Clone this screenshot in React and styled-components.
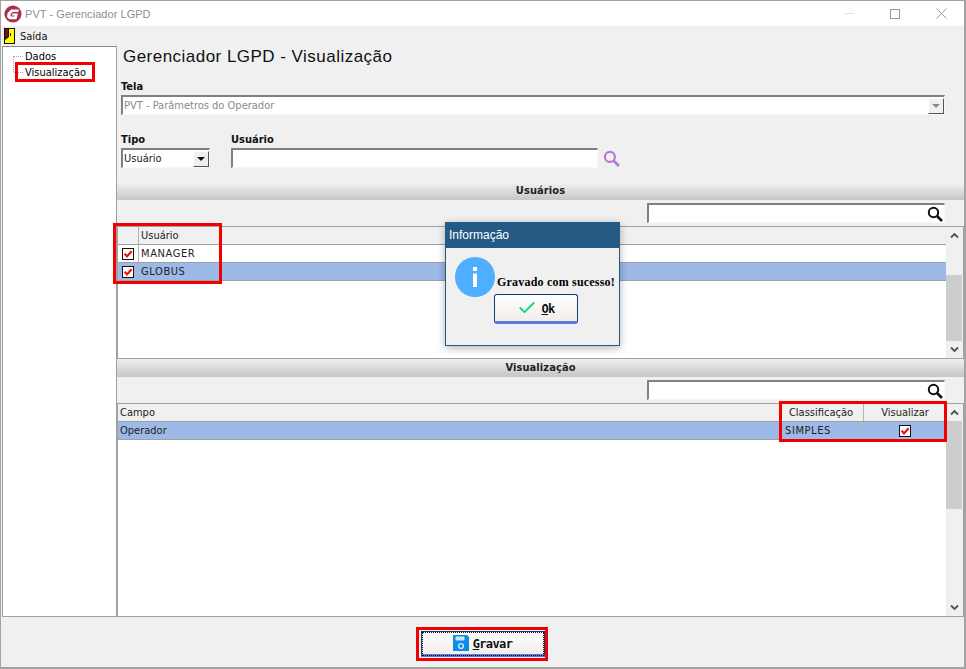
import React from 'react'
import styled, { createGlobalStyle } from 'styled-components'
import { Check } from 'lucide-react'

const Global = createGlobalStyle`
  html, body { margin: 0; padding: 0; overflow: hidden; background: #f0f0f0; }
  * { box-sizing: border-box; }
`

const uiFont = '"DejaVu Sans Condensed", "DejaVu Sans", sans-serif'

const Win = styled.div`
  position: relative;
  width: 966px;
  height: 669px;
  border: 1px solid #a3a3a3;
  border-bottom-width: 2px;
  border-right-width: 2px;
  background: #f0f0f0;
  font-family: ${uiFont};
  font-size: 11px;
  color: #111;
  display: flex;
  flex-direction: column;
  overflow: hidden;
`

const TitleBar = styled.div`
  height: 25px;
  background: #fff;
  display: flex;
  align-items: center;
  padding-left: 3px;
  flex: none;
`

const TitleText = styled.span`
  margin-left: 3px;
  color: #8f8f8f;
  font-family: "Liberation Sans", Arial, sans-serif;
  font-size: 11px;
  letter-spacing: 0.05px;
`

const WinButtons = styled.div`
  margin-left: auto;
  display: flex;
  align-items: center;
  color: #9a9a9a;
`

const WinButton = styled.div`
  width: 46px;
  height: 25px;
  display: flex;
  align-items: center;
  justify-content: center;
`

const MenuBar = styled.div`
  height: 20px;
  display: flex;
  align-items: center;
  gap: 5px;
  padding-left: 3px;
  flex: none;
`

const Body = styled.div`
  flex: 1;
  display: flex;
  min-height: 0;
  padding-left: 1px;
`

const Side = styled.div`
  width: 115px;
  background: #fff;
  border: 1px solid #a0a0a0;
  border-top-color: #8a8a8a;
  padding: 3px 0 0 10px;
  flex: none;
`

const TreeList = styled.div`
  position: relative;
  border-left: 1px dotted #aaa;
  height: 16px;
  margin-top: 6px;
`

const TreeRow = styled.div`
  position: absolute;
  left: 0;
  top: ${p => p.$top}px;
  height: 16px;
  line-height: 17px;
  padding-left: 11px;
  white-space: nowrap;
  color: #000;
  &::before {
    content: '';
    position: absolute;
    left: 0;
    top: 8px;
    width: 9px;
    border-top: 1px dotted #aaa;
  }
`

const Main = styled.div`
  flex: 1;
  min-width: 0;
  display: flex;
  flex-direction: column;
`

const Form = styled.div`
  padding: 0 19px 0 4px;
  height: 137px;
  flex: none;
`

const Heading = styled.h1`
  margin: 0;
  padding: 1px 0 0 2px;
  height: 33px;
  font-family: "Liberation Sans", Arial, sans-serif;
  font-size: 17px;
  line-height: 20px;
  font-weight: 400;
  letter-spacing: 0.47px;
  color: #111;
`

const Label = styled.div`
  font-weight: 700;
  font-size: 11px;
  height: 16px;
  line-height: 16px;
`

const Sunken = styled.div`
  height: 20px;
  background: #fff;
  border: 1px solid #f8f8f8;
  border-top: 2px solid #808080;
  border-left: 2px solid #808080;
  display: flex;
  align-items: center;
  font-size: 11px;
  color: ${p => (p.$muted ? '#8a8a8a' : '#222')};
  padding-left: 1px;
  width: ${p => p.$w || 'auto'};
`

const DropBtn = styled.div`
  margin-left: auto;
  width: 16px;
  height: 16px;
  background: #f0f0f0;
  border: 1px solid #fff;
  border-right-color: #555;
  border-bottom-color: #555;
  display: flex;
  align-items: center;
  justify-content: center;
  &::after {
    content: '';
    border-left: 4px solid transparent;
    border-right: 4px solid transparent;
    border-top: 4px solid ${p => (p.$muted ? '#8a8a8a' : '#111')};
  }
`

const FieldRow = styled.div`
  display: flex;
  gap: 21px;
  margin-top: 17px;
`

const FieldPair = styled.div`
  display: flex;
  align-items: center;
  gap: 5px;
`

const SectionBar = styled.div`
  height: ${p => p.$h || 17}px;
  flex: none;
  background: linear-gradient(#f0f0f0, #c6c6c6);
  text-align: center;
  font-weight: 700;
  font-size: 11px;
  line-height: ${p => p.$h || 16}px;
  letter-spacing: 0.1px;
  color: #222;
`

const SearchRow = styled.div`
  height: ${p => p.$h}px;
  flex: none;
  display: flex;
  justify-content: flex-end;
  padding: ${p => p.$top}px 19px 0 0;
`

const SearchBox = styled(Sunken)`
  width: 298px;
  justify-content: flex-end;
  padding-right: 1px;
`

const GridFrame = styled.div`
  height: ${p => p.$h}px;
  flex: none;
  border: 1px solid #a0a0a0;
  background: #fff;
  display: flex;
`

const GridBody = styled.div`
  flex: 1;
  min-width: 0;
`

const Row = styled.div`
  height: 18px;
  display: grid;
  grid-template-columns: ${p => p.$cols};
  background: ${p => (p.$head ? '#f0f0f0' : p.$sel ? '#9db9e8' : '#fff')};
  border-bottom: 1px solid #a0a0a0;
`

const Cell = styled.div`
  display: flex;
  align-items: center;
  justify-content: ${p => (p.$center ? 'center' : 'flex-start')};
  padding-left: ${p => (p.$center ? 0 : p.$pad || 2)}px;
  font-size: 11px;
  letter-spacing: ${p => (p.$upper ? '0.6px' : 0)};
  color: #222;
  border-right: ${p => (p.$line ? '1px solid #b4b4b4' : 'none')};
  overflow: hidden;
  white-space: nowrap;
`

const Scroll = styled.div`
  width: 17px;
  flex: none;
  background: #f0f0f0;
  display: flex;
  flex-direction: column;
  padding-right: 1px;
`

const ScrollBtn = styled.div`
  height: 17px;
  flex: none;
  display: flex;
  align-items: center;
  justify-content: center;
`

const ScrollTrack = styled.div`
  flex: 1;
  display: flex;
  flex-direction: column;
  justify-content: ${p => (p.$end ? 'flex-end' : 'flex-start')};
`

const Thumb = styled.div`
  height: ${p => p.$h}px;
  background: #cdcdcd;
`

const Footer = styled.div`
  height: 50px;
  flex: none;
  display: flex;
  justify-content: center;
  align-items: flex-start;
  padding-top: 14px;
`

const ActionBtn = styled.div`
  width: ${p => p.$w}px;
  height: ${p => p.$h}px;
  background: linear-gradient(#ffffff, #f3f0ee 85%, #f0eeee);
  border: 1px solid #123a70;
  border-bottom: 3px solid #5f78dc;
  border-radius: ${p => (p.$round ? 3 : 0)}px;
  display: flex;
  align-items: center;
  justify-content: center;
  gap: 4px;
  font-family: "DejaVu Sans Mono", monospace;
  font-weight: 700;
  font-size: 12px;
  letter-spacing: -0.6px;
  color: #111;
  outline: ${p => (p.$focus ? '1px dotted #111' : 'none')};
  outline-offset: -2px;
  span { padding-top: 1px; }
  u { text-underline-offset: 1px; }
`

const Highlight = styled.div`
  position: absolute;
  left: ${p => p.$x}px;
  top: ${p => p.$y}px;
  width: ${p => p.$w}px;
  height: ${p => p.$h}px;
  border: 3px solid #f00000;
  pointer-events: none;
`

const Dialog = styled.div`
  position: absolute;
  left: 444px;
  top: 221px;
  width: 175px;
  height: 124px;
  background: #f0f0f0;
  border: 1px solid #245a84;
  box-shadow: 0 2px 8px rgba(0, 0, 0, 0.3);
  display: flex;
  flex-direction: column;
`

const DialogTitle = styled.div`
  height: 25px;
  background: #245a84;
  color: #fff;
  font-family: "Liberation Sans", Arial, sans-serif;
  font-size: 12px;
  line-height: 25px;
  padding-left: 3px;
  flex: none;
`

const DialogBody = styled.div`
  display: flex;
  align-items: center;
  padding: 9px 0 0 9px;
  gap: 2px;
`

const DialogText = styled.span`
  font-family: "Liberation Serif", "Times New Roman", serif;
  font-weight: 700;
  font-size: 12px;
  letter-spacing: 0.2px;
  color: #000;
  white-space: nowrap;
  padding-top: 10px;
`

const DialogAction = styled.div`
  display: flex;
  justify-content: center;
  margin-top: -3px;
  padding-left: 7px;
`

const Box = () => (
  <svg width="12" height="12" viewBox="0 0 12 12">
    <rect x="0.5" y="0.5" width="11" height="11" fill="#fff" stroke="#111" />
    <path d="M2.6 5.6 L5 8.4 L9.6 3.2" fill="none" stroke="#ee1111" strokeWidth="2.2" />
  </svg>
)

const Logo = () => (
  <svg width="18" height="18" viewBox="0 0 18 18">
    <circle cx="9" cy="9" r="8.6" fill="#a9324a" />
    <path d="M15 4.4 H7.2 L3.6 8 L3 12 L5.4 14.2 H12.4 L14 8.6 H8.4 L7.8 10.6 H10.8 L10.4 11.6 H7 L6.4 10.6 L7.2 8.2 L8.8 7 H14 Z" fill="#fff" />
  </svg>
)

const ExitIcon = () => (
  <svg width="11" height="16" viewBox="0 0 11 16">
    <rect width="11" height="16" fill="#111" />
    <path d="M5 1 H10 V15 H1 V12 L5 9 Z" fill="#ffff00" />
    <rect x="6" y="5" width="1" height="3" fill="#1a1a90" />
    <path d="M1 1 H4 V8 L1 10 Z" fill="#7a1010" />
  </svg>
)

const Lens = ({ color = '#111', size = 16, width = 2 }) => (
  <svg width={size} height={size} viewBox="0 0 16 16">
    <circle cx="6.5" cy="6.5" r="4.7" fill="none" stroke={color} strokeWidth={width} />
    <path d="M10 10 L15 15" stroke={color} strokeWidth={width + 0.6} />
  </svg>
)

const Chevron = ({ down }) => (
  <svg width="9" height="7" viewBox="0 0 9 7">
    <path d={down ? 'M1 1.5 L4.5 5 L8 1.5' : 'M1 5.5 L4.5 2 L8 5.5'} fill="none" stroke="#505050" strokeWidth="1.8" />
  </svg>
)

const Floppy = () => (
  <svg width="16" height="16" viewBox="0 0 16 16">
    <path d="M0 0 H14 L16 2 V16 H0 Z" fill="#0a8de8" />
    <rect x="2.5" y="1.5" width="9" height="4" rx="0.5" fill="#cfe6fa" />
    <circle cx="8" cy="11" r="2.4" fill="none" stroke="#cfe6fa" strokeWidth="1.4" />
  </svg>
)

const InfoIcon = () => (
  <svg width="40" height="40" viewBox="0 0 40 40">
    <circle cx="20" cy="20" r="20" fill="#4eaeff" />
    <rect x="18" y="10" width="4" height="4" fill="#fff" />
    <rect x="18" y="16.5" width="4" height="13.5" fill="#fff" />
  </svg>
)

const ScrollBar = ({ thumb, end }) => (
  <Scroll>
    <ScrollBtn><Chevron /></ScrollBtn>
    <ScrollTrack $end={end}><Thumb $h={thumb} /></ScrollTrack>
    <ScrollBtn><Chevron down /></ScrollBtn>
  </Scroll>
)

const userCols = '21px 80px 1fr'
const viewCols = '1fr 85px 82px'

export default function App() {
  return (
    <Win>
      <Global />
      <TitleBar>
        <Logo />
        <TitleText>PVT - Gerenciador LGPD</TitleText>
        <WinButtons>
          <WinButton>
            <svg width="11" height="11" viewBox="0 0 11 11"><path d="M0.5 5.5 H10.5" stroke="#e2e2e2" /></svg>
          </WinButton>
          <WinButton>
            <svg width="10" height="10" viewBox="0 0 10 10"><rect x="0.5" y="0.5" width="9" height="9" fill="none" stroke="#9a9a9a" /></svg>
          </WinButton>
          <WinButton>
            <svg width="11" height="11" viewBox="0 0 11 11"><path d="M0.5 0.5 L10.5 10.5 M10.5 0.5 L0.5 10.5" stroke="#9a9a9a" /></svg>
          </WinButton>
        </WinButtons>
      </TitleBar>
      <MenuBar>
        <ExitIcon />
        <span>Saída</span>
      </MenuBar>
      <Body>
        <Side>
          <TreeList>
            <TreeRow $top={-8}>Dados</TreeRow>
            <TreeRow $top={8}>Visualização</TreeRow>
          </TreeList>
        </Side>
        <Main>
          <Form>
            <Heading>Gerenciador LGPD - Visualização</Heading>
            <Label>Tela</Label>
            <Sunken $muted>
              PVT - Parâmetros do Operador
              <DropBtn $muted />
            </Sunken>
            <FieldRow>
              <div>
                <Label>Tipo</Label>
                <Sunken $w="89px">
                  Usuário
                  <DropBtn />
                </Sunken>
              </div>
              <div>
                <Label>Usuário</Label>
                <FieldPair>
                  <Sunken $w="367px" />
                  <Lens color="#b877d8" size={17} />
                </FieldPair>
              </div>
            </FieldRow>
          </Form>
          <SectionBar>Usuários</SectionBar>
          <SearchRow $h={26} $top={3}>
            <SearchBox><Lens /></SearchBox>
          </SearchRow>
          <GridFrame $h={133}>
            <GridBody>
              <Row $head $cols={userCols}>
                <Cell $line />
                <Cell>Usuário</Cell>
                <Cell />
              </Row>
              <Row $cols={userCols}>
                <Cell $center $line><Box /></Cell>
                <Cell $upper>MANAGER</Cell>
                <Cell />
              </Row>
              <Row $sel $cols={userCols}>
                <Cell $center $line><Box /></Cell>
                <Cell $upper>GLOBUS</Cell>
                <Cell />
              </Row>
            </GridBody>
            <ScrollBar thumb={66} end />
          </GridFrame>
          <SectionBar $h={18}>Visualização</SectionBar>
          <SearchRow $h={26} $top={3}>
            <SearchBox><Lens /></SearchBox>
          </SearchRow>
          <GridFrame $h={214}>
            <GridBody>
              <Row $head $cols={viewCols}>
                <Cell>Campo</Cell>
                <Cell $center $line>Classificação</Cell>
                <Cell $center>Visualizar</Cell>
              </Row>
              <Row $sel $cols={viewCols}>
                <Cell>Operador</Cell>
                <Cell $line $upper $pad={6}>SIMPLES</Cell>
                <Cell $center><Box /></Cell>
              </Row>
            </GridBody>
            <ScrollBar thumb={88} />
          </GridFrame>
        </Main>
      </Body>
      <Footer>
        <ActionBtn $focus $w={124} $h={26}>
          <Floppy />
          <span><u>G</u>ravar</span>
        </ActionBtn>
      </Footer>

      <Highlight $x={14} $y={61} $w={80} $h={20} />
      <Highlight $x={112} $y={222} $w={109} $h={61} />
      <Highlight $x={778} $y={400} $w={168} $h={41} />
      <Highlight $x={415} $y={626} $w={132} $h={34} />

      <Dialog>
        <DialogTitle>Informação</DialogTitle>
        <DialogBody>
          <InfoIcon />
          <DialogText>Gravado com sucesso!</DialogText>
        </DialogBody>
        <DialogAction>
          <ActionBtn $round $w={84} $h={30}>
            <Check size={20} color="#1fd67a" strokeWidth={2.4} />
            <span><u>O</u>k</span>
          </ActionBtn>
        </DialogAction>
      </Dialog>
    </Win>
  )
}
